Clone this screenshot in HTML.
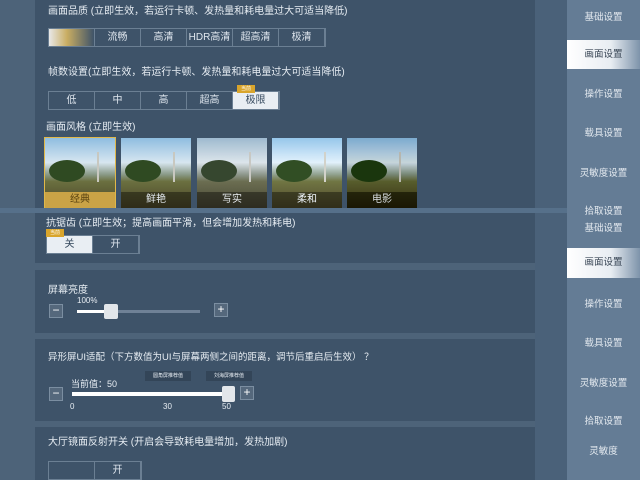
<!DOCTYPE html>
<html><head><meta charset="utf-8"><style>
*{margin:0;padding:0;box-sizing:border-box}
body{width:640px;height:480px;overflow:hidden;background:#4d6379;font-family:"Liberation Sans","Noto Sans CJK SC",sans-serif;color:#e6ecf2;position:relative}
.a{position:absolute}
.pan{position:absolute;left:35px;width:500px;background:#3e5369}
.t{position:absolute;font-size:10px;white-space:nowrap}
.seg{position:absolute;display:flex;height:19px;border:1px solid #6b7f93}
.seg div{width:46px;border-right:1px solid #6b7f93;font-size:10px;text-align:center;line-height:17px;color:#dfe6ee}
.seg div.on{background:#e9eef3;color:#33475c}
.tag{position:absolute;width:18px;height:8px;background:#d9a52c;font-size:5px;color:#fff;line-height:8px;text-align:center}
.side{position:absolute;left:567px;width:73px;background:#647c95}
.si{position:absolute;left:567px;width:73px;text-align:center;font-size:9.5px;color:#e3e9ef}
.sel{position:absolute;left:567px;width:73px;height:30px;background:linear-gradient(90deg,#fff 0%,#e8edf2 60%,#7d93aa 100%);color:#3a4756;text-align:center;font-size:9.5px;line-height:30px}
.img{position:absolute;top:138px;width:70px;height:70px;overflow:hidden;background:linear-gradient(#8fbde0 0%,#d7e6f0 35%,#8a9a88 52%,#6b7040 62%,#4a4428 100%)}
.img i{position:absolute;left:4px;top:22px;width:36px;height:22px;border-radius:50%;background:#2f4a22}
.img b{position:absolute;left:52px;top:14px;width:2px;height:30px;background:#c8c8c0}
.img span{position:absolute;bottom:0;left:0;right:0;height:16px;font-size:10px;text-align:center;line-height:16px;background:rgba(20,20,10,.5)}
.btn{position:absolute;width:14px;height:14px;background:#55687c;border:1px solid #7b8ea1;color:#fff;font-size:12px;line-height:11px;text-align:center}
</style></head><body>
<div class="side" style="top:0;height:480px"></div>
<div class="a" style="left:535px;top:0;width:32px;height:480px;background:#4a6179"></div>
<div class="pan" style="top:0;height:208px"></div>
<div class="t" style="left:48px;top:2px">画面品质 (立即生效，若运行卡顿、发热量和耗电量过大可适当降低)</div>
<div class="seg" style="left:48px;top:28px"><div style="background:linear-gradient(90deg,#e8e8e8,#c9ad62 40%,#3e5369)"></div><div>流畅</div><div>高清</div><div>HDR高清</div><div>超高清</div><div>极清</div></div>
<div class="t" style="left:48px;top:63px">帧数设置(立即生效，若运行卡顿、发热量和耗电量过大可适当降低)</div>
<div class="seg" style="left:48px;top:91px"><div>低</div><div>中</div><div>高</div><div>超高</div><div class="on">极限</div></div>
<div class="tag" style="left:237px;top:85px">当前</div>
<div class="t" style="left:46px;top:118px">画面风格 (立即生效)</div>
<div class="img" style="left:45px;outline:1px solid #e0b84a"><i></i><b></b><span style="background:#caa346;color:#5a4310">经典</span></div>
<div class="img" style="left:121px"><i></i><b></b><span>鲜艳</span></div>
<div class="img" style="left:197px;filter:saturate(.6)"><i></i><b></b><span>写实</span></div>
<div class="img" style="left:272px;filter:brightness(1.05)"><i></i><b></b><span>柔和</span></div>
<div class="img" style="left:347px;filter:contrast(1.2) brightness(.85)"><i></i><b></b><span>电影</span></div>
<div class="a" style="left:0;top:208px;width:567px;height:5px;background:#56708a"></div>
<div class="pan" style="top:213px;height:50px"></div>
<div class="t" style="left:46px;top:214px">抗锯齿 (立即生效；提高画面平滑，但会增加发热和耗电)</div>
<div class="seg" style="left:46px;top:235px"><div class="on">关</div><div>开</div></div>
<div class="tag" style="left:46px;top:229px">当前</div>
<div class="pan" style="top:270px;height:63px"></div>
<div class="t" style="left:48px;top:281px">屏幕亮度</div>
<div class="t" style="left:77px;top:296px;font-size:8px">100%</div>
<div class="btn" style="left:49px;top:304px">−</div>
<div class="a" style="left:77px;top:310px;width:123px;height:3px;background:#6f8196"></div>
<div class="a" style="left:77px;top:310px;width:32px;height:3px;background:#fff"></div>
<div class="a" style="left:104px;top:304px;width:14px;height:15px;background:#e2e6ea;border-radius:2px"></div>
<div class="btn" style="left:214px;top:303px">+</div>
<div class="pan" style="top:339px;height:82px"></div>
<div class="t" style="left:48px;top:349px;font-size:9.5px">异形屏UI适配（下方数值为UI与屏幕两侧之间的距离，调节后重启后生效） ？</div>
<div class="t" style="left:71px;top:377px;font-size:9px">当前值：50</div>
<div class="a" style="left:145px;top:371px;width:46px;height:10px;background:#334558;font-size:5px;line-height:10px;text-align:center">圆角屏推荐值</div>
<div class="a" style="left:206px;top:371px;width:46px;height:10px;background:#334558;font-size:5px;line-height:10px;text-align:center">刘海屏推荐值</div>
<div class="btn" style="left:49px;top:387px">−</div>
<div class="a" style="left:72px;top:392px;width:160px;height:4px;background:#fff"></div>
<div class="a" style="left:222px;top:386px;width:13px;height:16px;background:#e2e6ea;border-radius:2px"></div>
<div class="btn" style="left:240px;top:386px">+</div>
<div class="t" style="left:70px;top:402px;font-size:8px">0</div>
<div class="t" style="left:163px;top:402px;font-size:8px">30</div>
<div class="t" style="left:222px;top:402px;font-size:8px">50</div>
<div class="pan" style="top:427px;height:53px"></div>
<div class="t" style="left:48px;top:433px">大厅镜面反射开关 (开启会导致耗电量增加，发热加剧)</div>
<div class="seg" style="left:48px;top:461px"><div></div><div>开</div></div>
<div class="si" style="top:9px">基础设置</div>
<div class="sel" style="top:40px;height:29px;line-height:29px">画面设置</div>
<div class="si" style="top:86px">操作设置</div>
<div class="si" style="top:125px">载具设置</div>
<div class="si" style="top:165px">灵敏度设置</div>
<div class="si" style="top:203px">拾取设置</div>
<div class="si" style="top:220px">基础设置</div>
<div class="sel" style="top:248px">画面设置</div>
<div class="si" style="top:296px">操作设置</div>
<div class="si" style="top:335px">载具设置</div>
<div class="si" style="top:375px">灵敏度设置</div>
<div class="si" style="top:413px">拾取设置</div>
<div class="si" style="top:443px">灵敏度</div>
</body></html>
